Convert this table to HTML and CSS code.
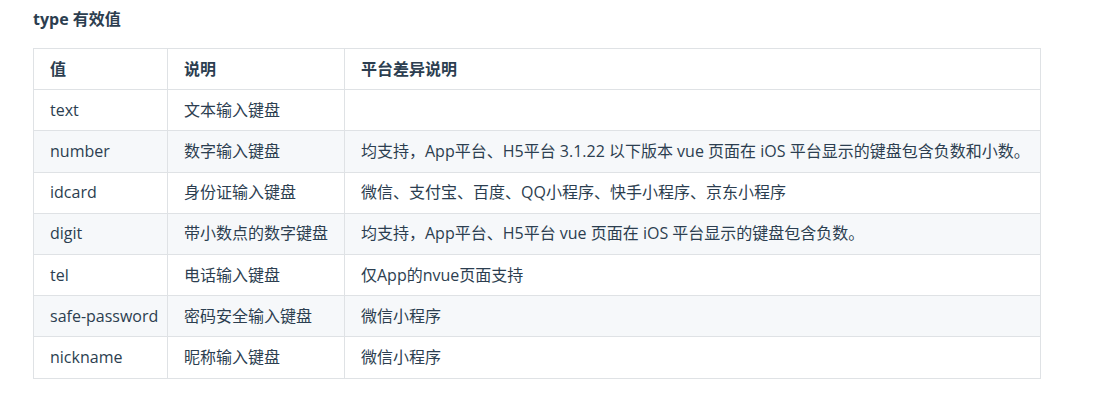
FILE: index.html
```html
<!DOCTYPE html>
<html lang="zh-CN">
<head>
<meta charset="utf-8">
<title>type 有效值</title>
<link rel="stylesheet" href="styles.css">
</head>
<body>
<div class="content">
  <p class="title"><strong>type 有效值</strong></p>
  <table class="doc-table">
    <colgroup>
      <col class="c1">
      <col class="c2">
      <col class="c3">
    </colgroup>
    <thead>
      <tr><th>值</th><th>说明</th><th>平台差异说明</th></tr>
    </thead>
    <tbody>
      <tr><td>text</td><td>文本输入键盘</td><td></td></tr>
      <tr><td>number</td><td>数字输入键盘</td><td>均支持，App平台、H5平台 3.1.22 以下版本 vue 页面在 iOS 平台显示的键盘包含负数和小数。</td></tr>
      <tr><td>idcard</td><td>身份证输入键盘</td><td>微信、支付宝、百度、QQ小程序、快手小程序、京东小程序</td></tr>
      <tr><td>digit</td><td>带小数点的数字键盘</td><td>均支持，App平台、H5平台 vue 页面在 iOS 平台显示的键盘包含负数。</td></tr>
      <tr><td>tel</td><td>电话输入键盘</td><td>仅App的nvue页面支持</td></tr>
      <tr><td>safe-password</td><td>密码安全输入键盘</td><td>微信小程序</td></tr>
      <tr><td>nickname</td><td>昵称输入键盘</td><td>微信小程序</td></tr>
    </tbody>
  </table>
</div>
</body>
</html>
```
FILE: styles.css
```css
html, body {
  margin: 0;
  padding: 0;
  background: #ffffff;
}
body {
  font-family: "Open Sans", "Noto Sans CJK SC", sans-serif;
  font-size: 16px;
  color: #2c3e50;
}
.content {
  padding: 9px 0 0 33px;
}
.title {
  margin: 0 0 19px 0;
  line-height: 20px;
  font-size: 16px;
}
.title strong {
  font-weight: 700;
}
.doc-table {
  border-collapse: collapse;
  table-layout: fixed;
  width: 1007px;
}
.c1 { width: 134px; }
.c2 { width: 177px; }
.c3 { width: 696px; }
.doc-table th,
.doc-table td {
  border: 1px solid #dfe2e5;
  padding: 9.6px 16px;
  line-height: 21px;
  text-align: left;
  white-space: nowrap;
}
.doc-table th {
  font-weight: 700;
}
.doc-table tbody tr:nth-child(2n) {
  background: #f6f8fa;
}
```
